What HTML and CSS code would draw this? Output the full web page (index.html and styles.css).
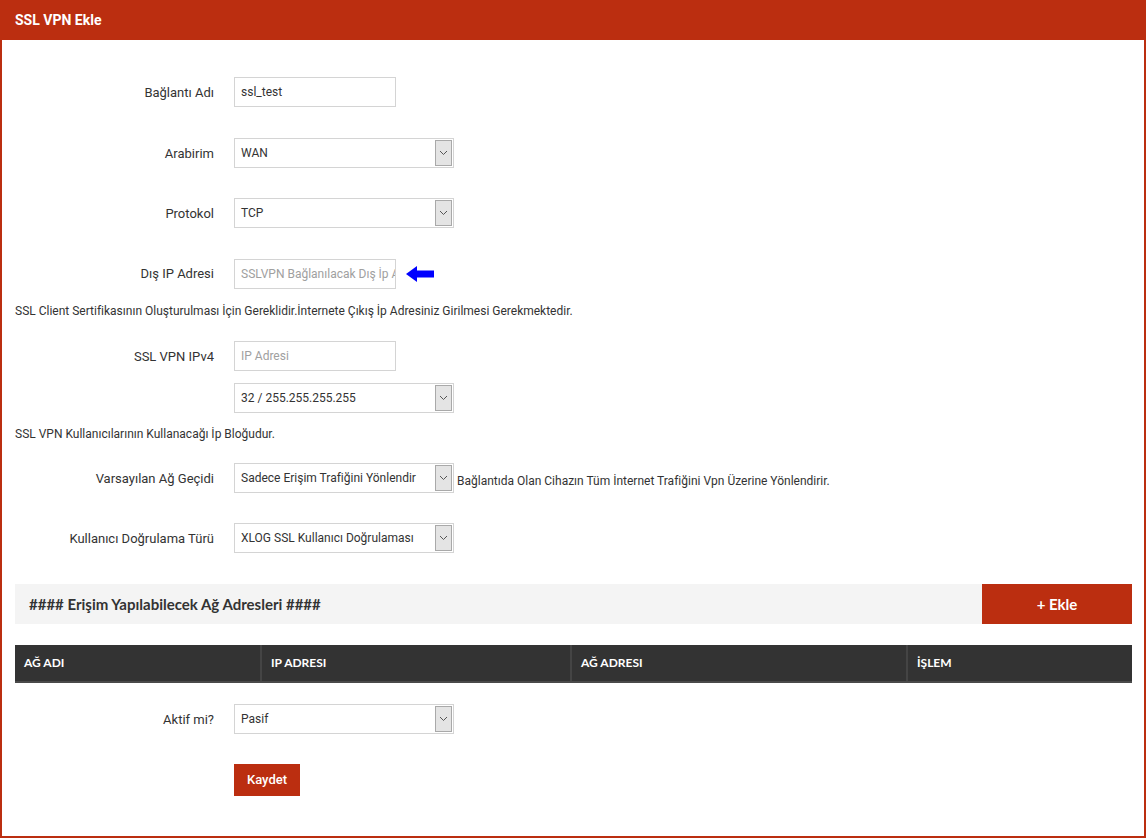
FILE: index.html
```html
<!DOCTYPE html>
<html lang="tr">
<head>
<meta charset="utf-8">
<title>SSL VPN Ekle</title>
<link rel="stylesheet" href="styles.css">
</head>
<body>
<div class="frame">
  <div class="topbar">SSL VPN Ekle</div>
  <div class="content">
    <div class="row r1">
      <div class="label">Bağlantı Adı</div>
      <div class="input">ssl_test</div>
    </div>
    <div class="row r2 first">
      <div class="label">Arabirim</div>
      <div class="select"><span class="val">WAN</span><span class="drop"><svg width="9" height="6" viewBox="0 0 9 6"><path d="M1 1 L4.5 4.5 L8 1" fill="none" stroke="#555" stroke-width="1"/></svg></span></div>
    </div>
    <div class="row r2">
      <div class="label">Protokol</div>
      <div class="select"><span class="val">TCP</span><span class="drop"><svg width="9" height="6" viewBox="0 0 9 6"><path d="M1 1 L4.5 4.5 L8 1" fill="none" stroke="#555" stroke-width="1"/></svg></span></div>
    </div>
    <div class="row r2 tall">
      <div class="label">Dış IP Adresi</div>
      <div class="input ph tall-input">SSLVPN Bağlanılacak Dış İp Adresi</div>
      <svg class="arrow" width="28" height="16" viewBox="0 0 28 16"><path d="M0 8 L11 0 L11 4.5 L28 4.5 L28 11.5 L11 11.5 L11 16 Z" fill="#0000ff"/></svg>
    </div>
    <p class="help h1">SSL Client Sertifikasının Oluşturulması İçin Gereklidir.İnternete Çıkış İp Adresiniz Girilmesi Gerekmektedir.</p>
    <div class="row">
      <div class="label">SSL VPN IPv4</div>
      <div class="input ph">IP Adresi</div>
    </div>
    <div class="row r3">
      <div class="label"></div>
      <div class="select"><span class="val">32 / 255.255.255.255</span><span class="drop"><svg width="9" height="6" viewBox="0 0 9 6"><path d="M1 1 L4.5 4.5 L8 1" fill="none" stroke="#555" stroke-width="1"/></svg></span></div>
    </div>
    <p class="help h2">SSL VPN Kullanıcılarının Kullanacağı İp Bloğudur.</p>
    <div class="row">
      <div class="label">Varsayılan Ağ Geçidi</div>
      <div class="select"><span class="val">Sadece Erişim Trafiğini Yönlendir</span><span class="drop"><svg width="9" height="6" viewBox="0 0 9 6"><path d="M1 1 L4.5 4.5 L8 1" fill="none" stroke="#555" stroke-width="1"/></svg></span></div>
      <span class="note">Bağlantıda Olan Cihazın Tüm İnternet Trafiğini Vpn Üzerine Yönlendirir.</span>
    </div>
    <div class="row r2">
      <div class="label">Kullanıcı Doğrulama Türü</div>
      <div class="select"><span class="val">XLOG SSL Kullanıcı Doğrulaması</span><span class="drop"><svg width="9" height="6" viewBox="0 0 9 6"><path d="M1 1 L4.5 4.5 L8 1" fill="none" stroke="#555" stroke-width="1"/></svg></span></div>
    </div>
    <div class="section">
      <div class="section-title">#### Erişim Yapılabilecek Ağ Adresleri ####</div>
      <div class="add-btn">+ Ekle</div>
    </div>
    <div class="thead">
      <div class="th c1">AĞ ADI</div>
      <div class="th c2">IP ADRESI</div>
      <div class="th c3">AĞ ADRESI</div>
      <div class="th c4">İŞLEM</div>
    </div>
    <div class="row r4">
      <div class="label">Aktif mi?</div>
      <div class="select"><span class="val">Pasif</span><span class="drop"><svg width="9" height="6" viewBox="0 0 9 6"><path d="M1 1 L4.5 4.5 L8 1" fill="none" stroke="#555" stroke-width="1"/></svg></span></div>
    </div>
    <div class="row r5">
      <div class="label"></div>
      <div class="save-btn">Kaydet</div>
    </div>
  </div>
</div>
</body>
</html>
```
FILE: styles.css
```css
* { box-sizing: border-box; }
html, body { margin: 0; padding: 0; }
body {
  font-family: Roboto, "Liberation Sans", Arial, sans-serif;
  color: #333;
  background: #fff;
}
.frame {
  width: 1146px;
  height: 838px;
  border: 2px solid #bb2e10;
  border-top: 0;
  display: flex;
  flex-direction: column;
  overflow: hidden;
}
.topbar {
  height: 40px;
  margin: 0 -2px;
  background: #bb2e10;
  color: #fff;
  font-weight: 700;
  font-size: 14px;
  line-height: 40px;
  padding-left: 15px;
}
.content {
  width: 1142px;
  padding: 37px 12px 0 13px;
  display: flex;
  flex-direction: column;
}
.row {
  display: flex;
  align-items: center;
  height: 30px;
}
.r1 { margin-top: 0; }
.r2 { margin-top: 30px; }
.r2.first { margin-top: 31px; }
.row.tall { height: 31px; }
.tall-input { height: 31px; }
.r3 { margin-top: 12px; }
.r4 { margin-top: 21px; }
.r5 { margin-top: 30px; height: 32px; }
.label {
  width: 199px;
  text-align: right;
  font-size: 13px;
  margin-right: 20px;
  color: #333;
  flex-shrink: 0;
}
.input {
  width: 162px;
  height: 30px;
  border: 1px solid #d4d4d4;
  font-size: 12px;
  line-height: 28px;
  padding: 0 6px;
  white-space: nowrap;
  overflow: hidden;
  color: #333;
}
.input.ph { color: #a0a0a0; }
.select {
  width: 220px;
  height: 30px;
  border: 1px solid #d4d4d4;
  font-size: 12px;
  display: flex;
  align-items: center;
  justify-content: space-between;
  padding-left: 6px;
  padding-right: 1px;
  flex-shrink: 0;
}
.select .val { white-space: nowrap; color: #333; }
.drop {
  width: 17px;
  height: 26px;
  background: #e4e4e4;
  border: 1px solid #a9a9a9;
  display: flex;
  align-items: center;
  justify-content: center;
}
.arrow { margin-left: 10px; }
.note {
  font-size: 12px;
  margin-left: 3px;
  padding-top: 6px;
  color: #333;
}
.help {
  margin: 0;
  font-size: 12px;
  line-height: 20px;
  color: #333;
}
.h1 { margin-top: 12px; margin-bottom: 20px; }
.h2 { margin-top: 11px; margin-bottom: 19px; }
.section {
  margin-top: 31px;
  height: 40px;
  background: #f4f4f4;
  display: flex;
  align-items: center;
  justify-content: space-between;
}
.section-title {
  font-family: Lato, "Liberation Sans", sans-serif;
  font-weight: 700;
  font-size: 15px;
  padding-left: 14px;
  color: #333;
}
.add-btn {
  width: 150px;
  height: 40px;
  flex-shrink: 0;
  background: #bb2e10;
  color: #fff;
  font-family: Lato, "Liberation Sans", sans-serif;
  font-weight: 700;
  font-size: 15px;
  line-height: 40px;
  text-align: center;
}
.thead {
  margin-top: 21px;
  height: 38px;
  background: #333;
  border-bottom: 2px solid #4a4a4a;
  display: flex;
}
.th {
  font-family: Lato, "Liberation Sans", sans-serif;
  font-weight: 700;
  font-size: 12px;
  color: #fff;
  line-height: 36px;
  padding-left: 9px;
  border-right: 2px solid #444;
}
.c1 { width: 247px; }
.c2 { width: 310px; }
.c3 { width: 336px; }
.c4 { flex: 1; border-right: 0; }
.save-btn {
  width: 66px;
  height: 32px;
  background: #bb2e10;
  color: #fff;
  font-size: 13px;
  font-weight: 500;
  line-height: 32px;
  text-align: center;
}
```
